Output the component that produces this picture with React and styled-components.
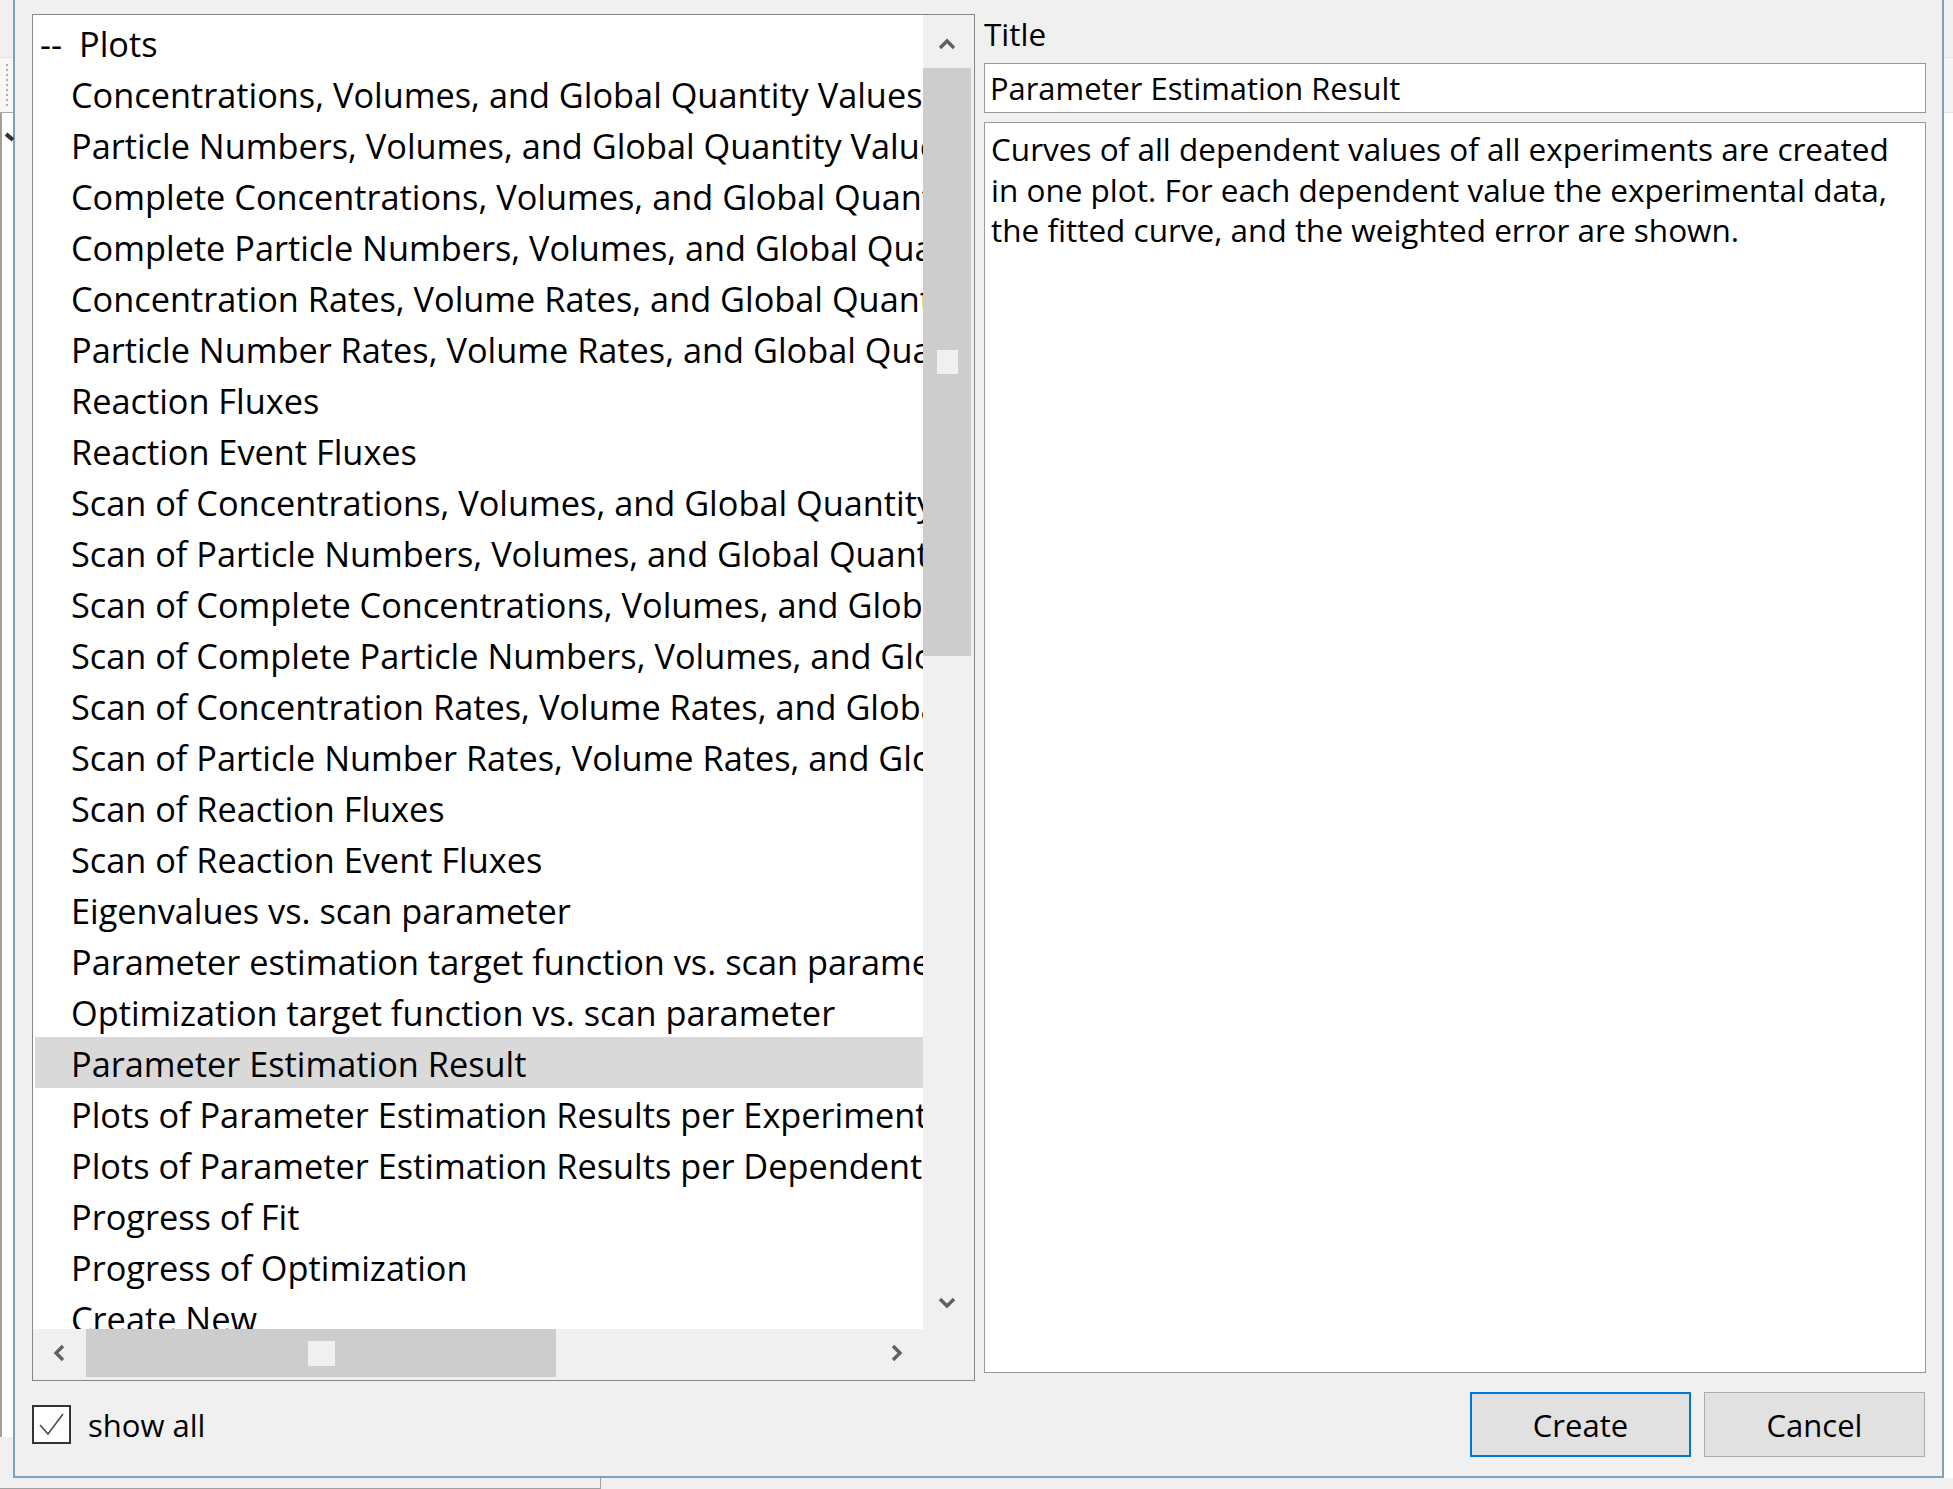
import styled, { createGlobalStyle } from "styled-components";

const GlobalStyle = createGlobalStyle`
	html, body {
		margin: 0;
		padding: 0;
	}
	body {
		background: #f0f0f0;
		font-family: "Open Sans", "Noto Sans", sans-serif;
		color: #000;
		overflow: hidden;
	}
`;

const plots = [
	"Concentrations, Volumes, and Global Quantity Values",
	"Particle Numbers, Volumes, and Global Quantity Values",
	"Complete Concentrations, Volumes, and Global Quantity Values",
	"Complete Particle Numbers, Volumes, and Global Quantity Values",
	"Concentration Rates, Volume Rates, and Global Quantity Rates",
	"Particle Number Rates, Volume Rates, and Global Quantity Rates",
	"Reaction Fluxes",
	"Reaction Event Fluxes",
	"Scan of Concentrations, Volumes, and Global Quantity Values",
	"Scan of Particle Numbers, Volumes, and Global Quantity Values",
	"Scan of Complete Concentrations, Volumes, and Global Quantity Values",
	"Scan of Complete Particle Numbers, Volumes, and Global Quantity Values",
	"Scan of Concentration Rates, Volume Rates, and Global Quantity Rates",
	"Scan of Particle Number Rates, Volume Rates, and Global Quantity Rates",
	"Scan of Reaction Fluxes",
	"Scan of Reaction Event Fluxes",
	"Eigenvalues vs. scan parameter",
	"Parameter estimation target function vs. scan parameter",
	"Optimization target function vs. scan parameter",
	"Parameter Estimation Result",
	"Plots of Parameter Estimation Results per Experiment",
	"Plots of Parameter Estimation Results per Dependent Value",
	"Progress of Fit",
	"Progress of Optimization",
	"Create New",
];

const description =
	"Curves of all dependent values of all experiments are created\nin one plot. For each dependent value the experimental data,\nthe fitted curve, and the weighted error are shown.";

const Chevron = ({ dir }) => {
	const pts = {
		up: "2,10 9,3 16,10",
		down: "2,3 9,10 16,3",
		left: "10,2 3,9 10,16",
		right: "3,2 10,9 3,16",
	}[dir];
	const vertical = dir === "up" || dir === "down";
	return (
		<svg
			width={vertical ? 18 : 13}
			height={vertical ? 13 : 18}
			viewBox={vertical ? "0 0 18 13" : "0 0 13 18"}
		>
			<polyline points={pts} fill="none" stroke="#606060" strokeWidth="3.4" />
		</svg>
	);
};

const App = () => {
	return (
		<Screen>
			<GlobalStyle />
			<LeftBackdrop>
				<BackdropTop />
				<BackdropGrip />
				<BackdropPane>
					<BackdropMark />
				</BackdropPane>
			</LeftBackdrop>

			<Dialog>
				<Main>
					<ListBox>
						<Viewport>
							<Row $indent={5}>
								<Dash>--</Dash>Plots
							</Row>
							{plots.map((p) => (
								<Row key={p} $indent={36} $selected={p === "Parameter Estimation Result"}>
									{p}
								</Row>
							))}
						</Viewport>
						<VScroll>
							<VArrow $pad="5px 3px 0 0">
								<Chevron dir="up" />
							</VArrow>
							<VThumb>
								<Grip $w={21} $h={24} />
							</VThumb>
							<Spacer />
							<VArrow $pad="0 3px 0 0">
								<Chevron dir="down" />
							</VArrow>
						</VScroll>
						<HScroll>
							<HArrow>
								<Chevron dir="left" />
							</HArrow>
							<HThumb>
								<Grip $w={27} $h={25} />
							</HThumb>
							<Spacer />
							<HArrow>
								<Chevron dir="right" />
							</HArrow>
						</HScroll>
						<Corner />
					</ListBox>

					<RightPane>
						<Label>Title</Label>
						<TitleInput type="text" defaultValue="Parameter Estimation Result" />
						<Description>{description}</Description>
					</RightPane>
				</Main>

				<Footer>
					<CheckRow>
						<CheckBox>
							<svg width="35" height="35" viewBox="0 0 35 35">
								<polyline
									points="6,18 14,27 29,7"
									fill="none"
									stroke="#4a4a4a"
									strokeWidth="1.6"
								/>
							</svg>
						</CheckBox>
						<CheckLabel>show all</CheckLabel>
					</CheckRow>
					<Buttons>
						<Button $default>Create</Button>
						<Button>Cancel</Button>
					</Buttons>
				</Footer>
			</Dialog>

			<RightBackdrop>
				<BackdropTop />
				<BackdropBar />
				<BackdropWhite />
			</RightBackdrop>

			<BottomBackdrop>
				<BottomBox />
			</BottomBackdrop>
		</Screen>
	);
};

const Screen = styled.div`
	width: 1953px;
	height: 1489px;
	display: grid;
	grid-template-columns: 13px 1931px 9px;
	grid-template-rows: 1478px 11px;
	overflow: hidden;
`;

const LeftBackdrop = styled.div`
	display: flex;
	flex-direction: column;
`;

const BackdropTop = styled.div`
	height: 57px;
	background: #f0f0f0;
`;

const BackdropGrip = styled.div`
	height: 56px;
	background: #f7f7f7;
	border-top: 1px solid #e3e3e3;
	border-bottom: 1px solid #a9a9a9;
	box-sizing: border-box;
	position: relative;

	&::before {
		content: "";
		position: absolute;
		left: 6px;
		top: 6px;
		width: 2px;
		height: 42px;
		background: repeating-linear-gradient(#b0b0b0 0 2px, transparent 2px 5px);
	}
`;

const BackdropPane = styled.div`
	height: 1324px;
	background: #fff;
	border-left: 2px solid #a0a0a0;
	position: relative;
`;

const BackdropMark = styled.div`
	position: absolute;
	left: 3px;
	top: 22px;
	width: 9px;
	height: 4px;
	background: #333;
	transform: rotate(40deg);
`;

const RightBackdrop = styled.div`
	display: flex;
	flex-direction: column;
`;

const BackdropBar = styled.div`
	height: 56px;
	background: #f5f5f5;
	border-top: 1px solid #e2e2e2;
	border-bottom: 1px solid #e2e2e2;
	box-sizing: border-box;
`;

const BackdropWhite = styled.div`
	flex: 1;
	background: #fff;
`;

const BottomBackdrop = styled.div`
	grid-column: 1 / -1;
	background: #f0f0f0;
`;

const BottomBox = styled.div`
	width: 600px;
	height: 10px;
	border-right: 1px solid #a0a0a0;
	border-bottom: 1px solid #a0a0a0;
`;

const Dialog = styled.div`
	border: 2px solid #7ba3c1;
	border-top: none;
	background: #f0f0f0;
	padding: 14px 16px 0 17px;
	display: flex;
	flex-direction: column;
`;

const Main = styled.div`
	display: grid;
	grid-template-columns: 943px 1fr;
	column-gap: 9px;
	height: 1367px;
`;

const ListBox = styled.div`
	border: 1px solid #828790;
	background: #fff;
	display: grid;
	grid-template-columns: 1fr 51px;
	grid-template-rows: 1fr 51px;
	overflow: hidden;
`;

const Viewport = styled.div`
	overflow: hidden;
	padding-top: 2px;
	min-width: 0;
	min-height: 0;
`;

const Row = styled.div`
	height: 51px;
	box-sizing: border-box;
	padding-top: 3px;
	padding-left: ${(p) => p.$indent}px;
	margin-left: 2px;
	line-height: 47px;
	font-size: 34.3px;
	white-space: nowrap;
	background: ${(p) => (p.$selected ? "#d9d9d9" : "transparent")};
`;

const Dash = styled.span`
	display: inline-block;
	width: 39px;
`;

const VScroll = styled.div`
	background: #f0f0f0;
	display: flex;
	flex-direction: column;
`;

const VArrow = styled.div`
	height: 53px;
	display: flex;
	align-items: center;
	justify-content: center;
	padding: ${(p) => p.$pad};
	box-sizing: border-box;
`;

const VThumb = styled.div`
	width: 48px;
	height: 588px;
	background: #cdcdcd;
	display: flex;
	align-items: center;
	justify-content: center;
`;

const Spacer = styled.div`
	flex: 1;
`;

const HScroll = styled.div`
	background: #f0f0f0;
	display: flex;
	align-items: flex-start;
`;

const HArrow = styled.div`
	width: 53px;
	height: 48px;
	display: flex;
	align-items: center;
	justify-content: center;
`;

const HThumb = styled.div`
	width: 470px;
	height: 48px;
	background: #cdcdcd;
	display: flex;
	align-items: center;
	justify-content: center;
`;

const Grip = styled.div`
	width: ${(p) => p.$w}px;
	height: ${(p) => p.$h}px;
	background: #f0f0f0;
`;

const Corner = styled.div`
	background: #f0f0f0;
`;

const RightPane = styled.div`
	display: flex;
	flex-direction: column;
	min-height: 0;
`;

const Label = styled.div`
	font-size: 31.5px;
	line-height: 40px;
	margin-bottom: 9px;
`;

const TitleInput = styled.input`
	height: 50px;
	box-sizing: border-box;
	border: 1px solid #999;
	background: #fff;
	padding: 0 5px;
	margin: 0;
	font-family: "Open Sans", "Noto Sans", sans-serif;
	font-size: 30.9px;
	line-height: 48px;
	color: #000;
	outline: none;
`;

const Description = styled.div`
	flex: 1;
	margin: 9px 0 8px;
	border: 1px solid #999;
	background: #fff;
	padding: 6px 6px;
	font-size: 31.5px;
	line-height: 40.5px;
	white-space: pre-wrap;
	overflow: hidden;
`;

const Footer = styled.div`
	display: flex;
	align-items: center;
	justify-content: space-between;
	padding: 11px 1px 19px 0;
	height: 95px;
	box-sizing: border-box;
`;

const CheckRow = styled.label`
	display: flex;
	align-items: center;
	gap: 17px;
`;

const CheckBox = styled.div`
	width: 39px;
	height: 39px;
	box-sizing: border-box;
	border: 2px solid #333;
	background: #fff;
	display: flex;
	align-items: center;
	justify-content: center;
`;

const CheckLabel = styled.span`
	font-size: 31px;
`;

const Buttons = styled.div`
	display: flex;
	gap: 13px;
`;

const Button = styled.button`
	width: 221px;
	height: 65px;
	box-sizing: border-box;
	background: #e1e1e1;
	border: ${(p) => (p.$default ? "2px solid #0078d7" : "1px solid #adadad")};
	font-family: "Open Sans", "Noto Sans", sans-serif;
	font-size: 31px;
	color: #000;
	padding: 0;
	border-radius: 0;
`;

export default App;
